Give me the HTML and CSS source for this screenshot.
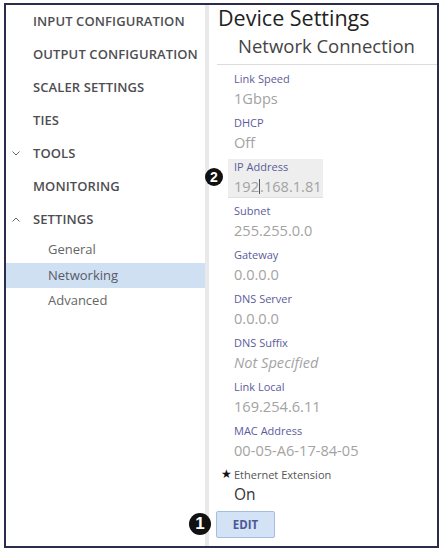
FILE: index.html
```html
<!DOCTYPE html>
<html>
<head>
<meta charset="utf-8">
<link rel="stylesheet" href="styles.css">
</head>
<body>
<div class="frame">
  <nav class="sidebar">
    <div class="nav-item">INPUT CONFIGURATION</div>
    <div class="nav-item">OUTPUT CONFIGURATION</div>
    <div class="nav-item">SCALER SETTINGS</div>
    <div class="nav-item">TIES</div>
    <div class="nav-item"><svg class="chev" viewBox="0 0 8 5" width="8" height="5"><path d="M0.5 0.5 L4 4 L7.5 0.5" fill="none" stroke="#666" stroke-width="1"/></svg>TOOLS</div>
    <div class="nav-item">MONITORING</div>
    <div class="nav-item"><svg class="chev" viewBox="0 0 8 5" width="8" height="5"><path d="M0.5 4.5 L4 1 L7.5 4.5" fill="none" stroke="#666" stroke-width="1"/></svg>SETTINGS</div>
    <div class="sub-item first">General</div>
    <div class="sub-item active">Networking</div>
    <div class="sub-item">Advanced</div>
  </nav>
  <div class="divider"></div>
  <main class="content">
    <h1 class="title">Device Settings</h1>
    <h2 class="subtitle">Network Connection</h2>
    <div class="rule"></div>
    <div class="fields">
      <div class="field"><div class="label">Link Speed</div><div class="value">1Gbps</div></div>
      <div class="field"><div class="label">DHCP</div><div class="value">Off</div></div>
      <div class="field ip">
        <span class="badge badge-2">2</span>
        <div class="ip-box"><div class="label">IP Address</div><div class="value">192<span class="caret"></span>.168.1.81</div></div>
      </div>
      <div class="field"><div class="label">Subnet</div><div class="value">255.255.0.0</div></div>
      <div class="field"><div class="label">Gateway</div><div class="value">0.0.0.0</div></div>
      <div class="field"><div class="label">DNS Server</div><div class="value">0.0.0.0</div></div>
      <div class="field"><div class="label">DNS Suffix</div><div class="value italic">Not Specified</div></div>
      <div class="field"><div class="label">Link Local</div><div class="value">169.254.6.11</div></div>
      <div class="field"><div class="label">MAC Address</div><div class="value">00-05-A6-17-84-05</div></div>
      <div class="field"><div class="label dark"><span class="star">★</span>Ethernet Extension</div><div class="value on">On</div></div>
    </div>
    <div class="actions">
      <span class="badge badge-1">1</span>
      <button class="edit">EDIT</button>
    </div>
  </main>
</div>
</body>
</html>
```

FILE: styles.css
```css
* { box-sizing: border-box; }
html, body { margin: 0; padding: 0; background: #fff; }
body { font-family: "Open Sans", "Liberation Sans", sans-serif; }

.frame {
  margin: 3px 0 0 4px;
  width: 435px;
  height: 545px;
  border: 2px solid #2c2d4e;
  display: flex;
  overflow: hidden;
}

.sidebar {
  width: 199px;
  flex: none;
}
.nav-item {
  height: 33px;
  line-height: 33px;
  padding-left: 27px;
  position: relative;
  font-size: 13px;
  font-weight: 600;
  color: #4e4e52;
  letter-spacing: 0.1px;
  white-space: nowrap;
}
.chev {
  position: absolute;
  left: 6px;
  top: 14px;
}
.sub-item {
  height: 25.5px;
  line-height: 25.5px;
  padding-left: 42px;
  font-size: 13px;
  color: #666;
}
.sub-item.first { margin-top: 1px; }
.sub-item.active { background: #cfe0f3; color: #5a5a66; }

.divider {
  width: 4px;
  flex: none;
  background: #e9e9e9;
}

.content {
  flex: 1;
  position: relative;
}
.title {
  margin: 0;
  padding-left: 9px;
  font-size: 21.5px;
  font-weight: 400;
  line-height: 26px;
  color: #222;
}
.subtitle {
  margin: 3px 0 0;
  padding-left: 29px;
  font-size: 18.5px;
  font-weight: 400;
  line-height: 24px;
  color: #444;
}
.rule {
  margin: 6px 0 0 8px;
  height: 1px;
  background: #dcdcdc;
}
.fields { padding-top: 6px; }
.field {
  position: relative;
  padding-left: 25px;
  margin-bottom: 6px;
}
.label {
  font-size: 11px;
  line-height: 16px;
  color: #5c5c9c;
}
.label.dark { color: #555; position: relative; }
.star {
  position: absolute;
  left: -13px;
  top: -1px;
  font-size: 12px;
  color: #111;
}
.value {
  font-size: 14.6px;
  line-height: 22px;
  color: #a3a3a3;
}
.value.italic { font-style: italic; }
.value.on { color: #333; font-size: 15.5px; }

.field.ip { padding-left: 19px; }
.ip-box {
  width: 95px;
  padding-left: 6px;
  background: #eeeeee;
  border-bottom: 1px solid #e0e0e0;
  margin-bottom: -1px;
}
.caret {
  display: inline-block;
  width: 1px;
  height: 15px;
  background: #555;
  vertical-align: -2px;
}

.badge {
  position: absolute;
  background: #111;
  color: #fff;
  border-radius: 50%;
  font-weight: 700;
  text-align: center;
  font-family: "Liberation Sans", "Open Sans", sans-serif;
}
.badge-2 {
  left: -4px;
  top: 9px;
  width: 18px;
  height: 18px;
  line-height: 18px;
  font-size: 14px;
}
.badge-1 {
  left: -20px;
  top: 2px;
  width: 22px;
  height: 22px;
  line-height: 22px;
  font-size: 17px;
}

.actions {
  position: relative;
  padding-left: 7px;
}
.edit {
  display: block;
  width: 59px;
  height: 27px;
  margin: 0;
  padding: 0;
  background: #d4e2f6;
  border: 1px solid #a6bde0;
  border-radius: 2px;
  font-family: "Open Sans", "Liberation Sans", sans-serif;
  font-size: 11.5px;
  font-weight: 700;
  color: #4a5898;
}
```
